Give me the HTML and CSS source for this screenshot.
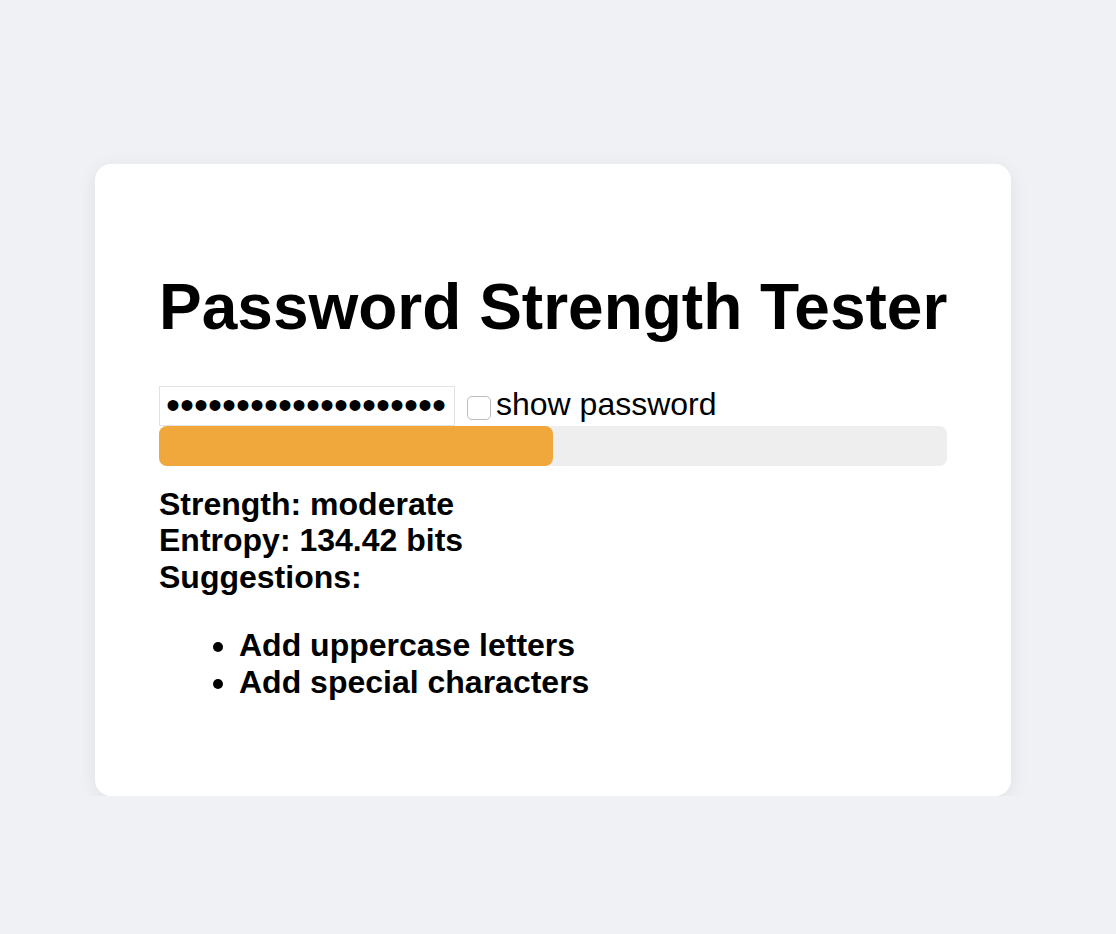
FILE: index.html
```html
<!DOCTYPE html>
<html lang="en">
<head>
<meta charset="utf-8">
<title>Password Strength Tester</title>
<link rel="stylesheet" href="styles.css">
</head>
<body>
<div class="page">
  <div class="card">
    <h1 class="title">Password Strength Tester</h1>
    <div class="input-row">
      <input class="pw-input" type="password" value="abcdefghijklmnopqrst">
      <input class="show-box" type="checkbox" id="show">
      <label class="show-label" for="show">show password</label>
    </div>
    <div class="meter">
      <div class="meter-fill" style="width: 50%"></div>
    </div>
    <div class="results">
      <div class="line">Strength: moderate</div>
      <div class="line">Entropy: 134.42 bits</div>
      <div class="line">Suggestions:</div>
      <ul class="suggestions">
        <li>Add uppercase letters</li>
        <li>Add special characters</li>
      </ul>
    </div>
  </div>
</div>
</body>
</html>
```

FILE: styles.css
```css
html, body {
  margin: 0;
  padding: 0;
  background: #f0f1f5;
}

body {
  font-family: "Liberation Sans", Arial, Helvetica, sans-serif;
  font-size: 32px;
  color: #000;
}

.page {
  padding: 164px 0 0 95px;
}

.card {
  box-sizing: border-box;
  width: 916px;
  background: #ffffff;
  border-radius: 16px;
  padding: 64px;
  box-shadow: 0 4px 20px rgba(0, 0, 0, 0.07);
}

.title {
  font-size: 64px;
  font-weight: bold;
  margin: 43px 0 41px;
  line-height: 1.15;
  white-space: nowrap;
}

.input-row {
  display: flex;
  align-items: flex-start;
  height: 40px;
}

.pw-input {
  box-sizing: border-box;
  width: 296px;
  height: 40px;
  margin: 0;
  padding: 0 6px;
  border: 1px solid #e3e3e3;
  font-family: "Liberation Sans", Arial, sans-serif;
  font-size: 40px;
  color: #000;
  outline: none;
  background: #fff;
}

.show-box {
  appearance: none;
  -webkit-appearance: none;
  box-sizing: border-box;
  width: 24px;
  height: 24px;
  margin: 10px 5px 0 12px;
  border: 1px solid #bdbdbd;
  border-radius: 5px;
  background: #fff;
}

.show-label {
  font-size: 32px;
  line-height: 1.15;
}

.meter {
  height: 40px;
  background: #eeeeee;
  border-radius: 8px;
}

.meter-fill {
  height: 100%;
  background: #f0a83c;
  border-radius: 8px;
}

.results {
  margin-top: 20px;
  font-weight: bold;
  line-height: 1.15;
}

.suggestions {
  margin: 31px 0 31px;
  padding-left: 80px;
}
```
